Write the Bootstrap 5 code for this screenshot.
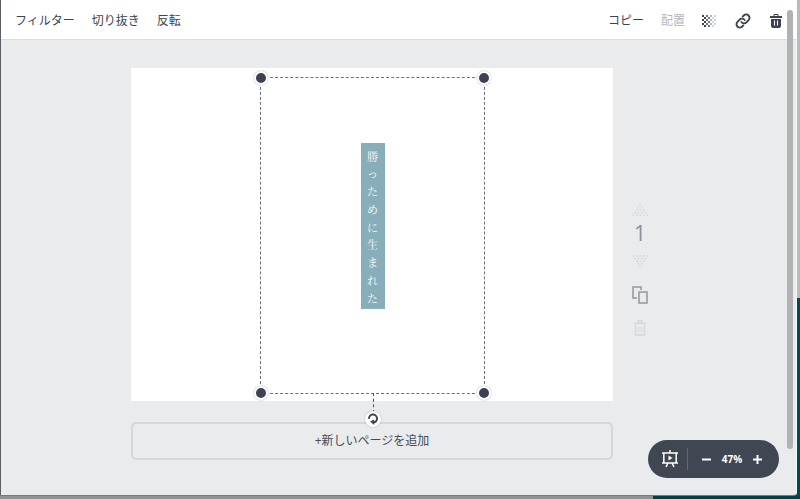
<!DOCTYPE html>
<html lang="ja">
<head>
<meta charset="utf-8">
<meta name="viewport" content="width=device-width, initial-scale=1">
<title>デザインエディター</title>
<link href="https://cdn.jsdelivr.net/npm/bootstrap@5.3.0/dist/css/bootstrap.min.css" rel="stylesheet">
<style>
  body {
    font-family: "Open Sans", "Noto Sans CJK JP", sans-serif;
    font-size: 12px;
    line-height: 16px;
    color: #3b4350;
    background: linear-gradient(to right, #8f9192 653px, #063f43 653px);
  }
  .desktop { min-height: 100vh; padding: 0 3px 4px 0; background: linear-gradient(#b9bbbb 298px, #034a50 298px) right top / 4px calc(100% - 4px) no-repeat; }
  .editor { background: #e9ebed; border-left: 1px solid #5c6066; border-bottom: 1px solid #77797b; border-right: 1px solid #f7fafb; border-bottom-right-radius: 4px; }
  .toolbar { height: 40px; padding: 2px 14px 0; border-bottom: 1px solid #dcdee0; }
  .tool { padding: 0; border: 0; background: none; color: #3b4350; display: flex; align-items: center; justify-content: center; }
  .tool:disabled { color: #b4b7bc; }
  .tool svg, .page-tools svg { display: block; }
  .text-tools { gap: 17px; }
  .icon-tools { gap: 19px; }
  .workspace { padding: 28px 0 35px 130px; }
  .artboard { min-height: 333px; padding: 1px 0 0 1px; background: #fff; }
  .selection { width: 225px; height: 317px; padding-top: 65px; border: 1px dashed #6b7078; }
  .banner-text { width: 24px; height: 166px; padding: 5px 0 2px; background: #87aeb9; color: #f8fbfb; font: 400 11px/17px "Noto Serif CJK JP", "Noto Sans CJK JP", serif; }
  .handle { width: 14px; height: 14px; border-radius: 50%; border: 2px solid #fff; background: #3b4350; box-shadow: 0 0 2px #0005; }
  .rotate-stem { height: 20px; border-left: 1px dashed #4d535c; }
  .rotate-btn { top: calc(100% + 18px); width: 16px; height: 16px; border-radius: 50%; background: #fff; box-shadow: 0 0 2px #0004; }
  .add-page { height: 38px; margin-top: 21px; border: 2px solid #d5d7d9; border-radius: 5px; background: none; color: #454c58; }
  .page-tools { width: 183px; padding: 136px 0 0 18px; }
  .page-tools-list { width: 18px; }
  .page-number { font-size: 21px; line-height: 26px; color: #8c9096; margin: 4px 0 9px; }
  .copy-page { margin-top: 19px; color: #92969a; }
  .delete-page { margin-top: 16px; }
  .page-tools .tool:disabled { color: #d5d7d9; }
  .zoom-bar { right: 17px; bottom: 17px; height: 38px; padding: 0 16px 0 14px; border-radius: 19px; background: #404753; color: #fff; }
  .zoom-bar .tool { color: #fff; }
  .zoom-divider { width: 1px; height: 22px; margin: 0 13px 0 9px; background: #626974; }
  .zoom-value { width: 40px; font-size: 10px; font-weight: 700; text-align: center; }
  .scroll-thumb { top: 10px; bottom: 46px; right: 3px; width: 6px; border-radius: 3px; background: #b0b2b4; }
</style>
<script src="https://cdn.jsdelivr.net/npm/bootstrap@5.3.0/dist/js/bootstrap.bundle.min.js"></script>
</head>
<body>
<div class="desktop d-flex">
  <div class="editor position-relative d-flex flex-column flex-grow-1">
    <header class="toolbar bg-white d-flex align-items-center justify-content-between">
      <div class="d-flex text-tools">
        <button class="tool" type="button">フィルター</button>
        <button class="tool" type="button">切り抜き</button>
        <button class="tool" type="button">反転</button>
      </div>
      <div class="d-flex align-items-center icon-tools">
        <div class="d-flex align-items-center text-tools">
          <button class="tool" type="button">コピー</button>
          <button class="tool" type="button" disabled>配置</button>
          <button class="tool" type="button" aria-label="透明度">
            <svg width="14" height="14" viewBox="1 0 14 14" fill="currentColor">
              <path d="M1 1h2v2H1zM3 3h2v2H3zM1 5h2v2H1zM3 7h2v2H3zM1 9h2v2H1zM3 11h2v2H3z"/>
              <path opacity=".75" d="M5 1h2v2H5zM5 5h2v2H5zM5 9h2v2H5zM7 3h2v2H7zM7 7h2v2H7zM7 11h2v2H7z"/>
              <path opacity=".4" d="M9 1h2v2H9zM9 5h2v2H9zM9 9h2v2H9z"/>
              <path opacity=".22" d="M11 3h2v2h-2zM11 7h2v2h-2zM11 11h2v2h-2zM13 1h2v2h-2zM13 5h2v2h-2zM13 9h2v2h-2z"/>
            </svg>
          </button>
        </div>
        <button class="tool" type="button" aria-label="リンク">
          <svg width="16" height="16" viewBox="0 0 24 24" fill="none" stroke="currentColor" stroke-width="2.8" stroke-linecap="round">
            <path d="M9.500 13.500a5 5 0 0 0 7.600.5l3.200-3.200a5 5 0 0 0-7.100-7.100L11.500 5.400"/>
            <path d="M14.500 10.500a5 5 0 0 0-7.600-.5l-3.200 3.200a5 5 0 0 0 7.100 7.100l1.700-1.700"/>
          </svg>
        </button>
        <button class="tool" type="button" aria-label="削除">
          <svg width="12" height="16" viewBox="1 0 12 16">
            <path fill="currentColor" d="M1 3h3.500V2a1 1 0 0 1 1-1h3a1 1 0 0 1 1 1v1H13v2H1zM2 6h10v7a2 2 0 0 1-2 2H4a2 2 0 0 1-2-2z"/>
            <path stroke="#fff" stroke-width="1" fill="none" d="M5.500 7.500v5M8.500 7.500v5M5.500 2.500h3"/>
          </svg>
        </button>
      </div>
    </header>

    <main class="workspace d-flex flex-grow-1">
      <div class="flex-grow-1 d-flex flex-column">
        <div class="artboard d-flex align-items-center justify-content-center">
          <div class="selection position-relative d-flex justify-content-center align-items-start">
            <div class="banner-text d-flex flex-column align-items-center justify-content-between">
              <span>勝</span><span>っ</span><span>た</span><span>め</span><span>に</span><span>生</span><span>ま</span><span>れ</span><span>た</span>
            </div>
            <span class="handle position-absolute top-0 start-0 translate-middle"></span>
            <span class="handle position-absolute top-0 start-100 translate-middle"></span>
            <span class="handle position-absolute top-100 start-0 translate-middle"></span>
            <span class="handle position-absolute top-100 start-100 translate-middle"></span>
            <span class="rotate-stem position-absolute top-100 start-50"></span>
            <button class="tool rotate-btn position-absolute start-50 translate-middle-x" type="button" aria-label="回転">
              <svg width="12" height="12" viewBox="0 0 12 12">
                <path fill="none" stroke="currentColor" stroke-width="2" d="M2 5.800A4 4 0 1 1 6.500 9.500"/>
                <path fill="currentColor" d="M3 8.600 7.200 6.400v5.600z"/>
              </svg>
            </button>
          </div>
        </div>
        <button class="add-page w-100" type="button">+新しいページを追加</button>
      </div>

      <aside class="page-tools flex-shrink-0">
        <div class="page-tools-list d-flex flex-column align-items-center">
          <button class="tool" type="button" aria-label="上へ移動" disabled>
            <svg width="16" height="12" viewBox="0 0 16 12" fill="none" stroke="currentColor" stroke-width="1.600" stroke-dasharray="1.600 1.900"><path d="M7 1h2M5.500 3.500h5M4 6h9M2 8.500h13M.5 11h15.500"/></svg>
          </button>
          <div class="page-number">1</div>
          <button class="tool" type="button" aria-label="下へ移動" disabled>
            <svg width="16" height="12" viewBox="0 0 16 12" fill="none" stroke="currentColor" stroke-width="1.600" stroke-dasharray="1.600 1.900"><path d="M.5 1h15.500M2 3.500h13M4 6h9M5.500 8.500h5M7 11h2"/></svg>
          </button>
          <button class="tool copy-page" type="button" aria-label="ページをコピー">
            <svg width="16" height="18" viewBox="0 0 16 18" fill="none" stroke="currentColor" stroke-width="1.500"><path d="M5 12H1V1h8v3M7 6h8v11H7z"/></svg>
          </button>
          <button class="tool delete-page" type="button" aria-label="ページを削除" disabled>
            <svg width="12" height="16" viewBox="0 0 12 16" fill="none" stroke="currentColor" stroke-width="1.300"><path d="M0 3.500h12M4 3V1h4v2M1.500 4v11h9V4M4.500 7v5M7.500 7v5"/></svg>
          </button>
        </div>
      </aside>
    </main>

    <div class="zoom-bar position-absolute d-flex align-items-center">
      <button class="tool" type="button" aria-label="プレゼンテーション">
        <svg width="16" height="18" viewBox="0 0 16 18" fill="none" stroke="currentColor" stroke-width="1.500">
          <path d="M8 0v3M1.800 3h12.400v10H1.800zM0 3h16M0 13h16M6 13l-2 4M10 13l2 4"/><path fill="currentColor" stroke="none" d="M6.500 5.500 10.500 8l-4 2.500z"/>
        </svg>
      </button>
      <span class="zoom-divider"></span>
      <button class="tool" type="button" aria-label="縮小"><svg width="11" height="11" viewBox="0 0 11 11"><path stroke="currentColor" stroke-width="2" d="M1 5.500h9"/></svg></button>
      <span class="zoom-value">47%</span>
      <button class="tool" type="button" aria-label="拡大"><svg width="11" height="11" viewBox="0 0 11 11"><path stroke="currentColor" stroke-width="2" d="M1 5.500h9M5.500 1v9"/></svg></button>
    </div>
    <div class="scroll-thumb position-absolute"></div>
  </div>
</div>
</body>
</html>
